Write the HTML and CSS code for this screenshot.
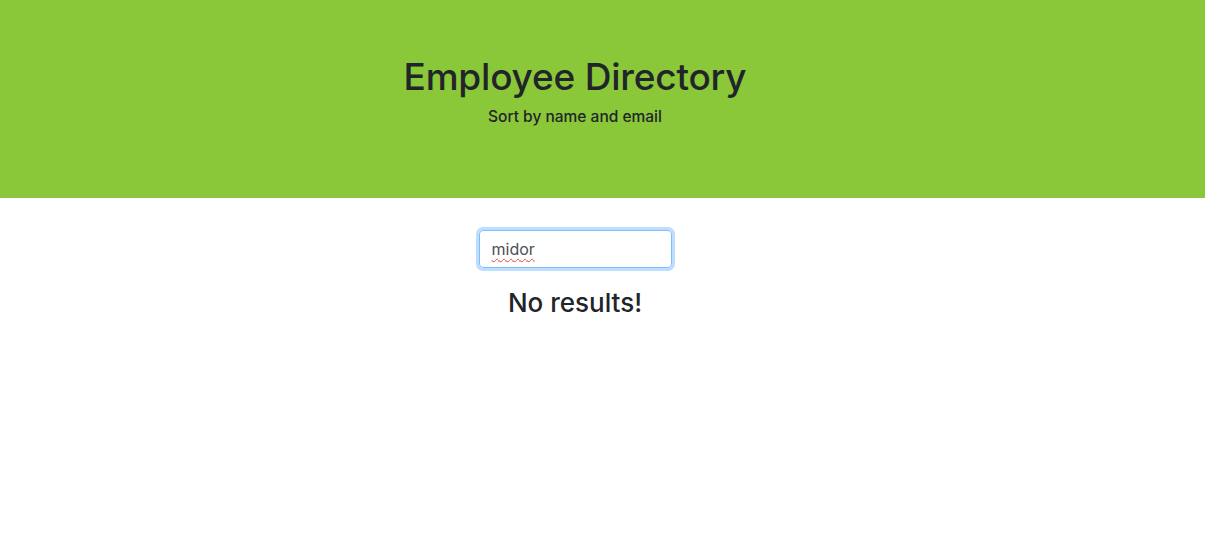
FILE: index.html
```html
<!DOCTYPE html>
<html>
<head>
<meta charset="utf-8">
<link rel="stylesheet" href="styles.css">
</head>
<body>
<header class="hero">
  <div class="wrap">
    <h1 class="title">Employee Directory</h1>
    <p class="subtitle">Sort by name and email</p>
  </div>
</header>
<main class="wrap content">
  <div class="search"><span class="typed">midor</span></div>
  <h3 class="empty">No results!</h3>
</main>
</body>
</html>
```
FILE: styles.css
```css
* { box-sizing: border-box; }
body {
  margin: 0;
  font-family: Inter, "Noto Sans", sans-serif;
  color: #212529;
  background: #fff;
}
.wrap {
  width: 1150px;
  display: flex;
  flex-direction: column;
  align-items: center;
}
.hero {
  background: #8ac739;
  height: 198px;
  padding-top: 55px;
}
.title {
  margin: 0;
  font-size: 37px;
  font-weight: 500;
  line-height: 1.2;
  letter-spacing: -0.2px;
}
.subtitle {
  margin: 6px 0 0;
  font-size: 15.5px;
  font-weight: 500;
  line-height: 1.5;
}
.content { padding-top: 32px; }
.search {
  width: 193px;
  height: 38px;
  border: 1px solid #80bdff;
  border-radius: 4px;
  box-shadow: 0 0 0 3px rgba(0,123,255,.25);
  padding: 0 12px;
  display: flex;
  align-items: center;
  font-size: 16px;
  color: #495057;
}
.typed {
  text-decoration: underline wavy #e0443e;
  text-decoration-thickness: 1px;
  text-underline-offset: 3px;
}
.empty {
  margin: 19px 0 0;
  font-size: 26px;
  font-weight: 500;
  line-height: 1.2;
}
```
